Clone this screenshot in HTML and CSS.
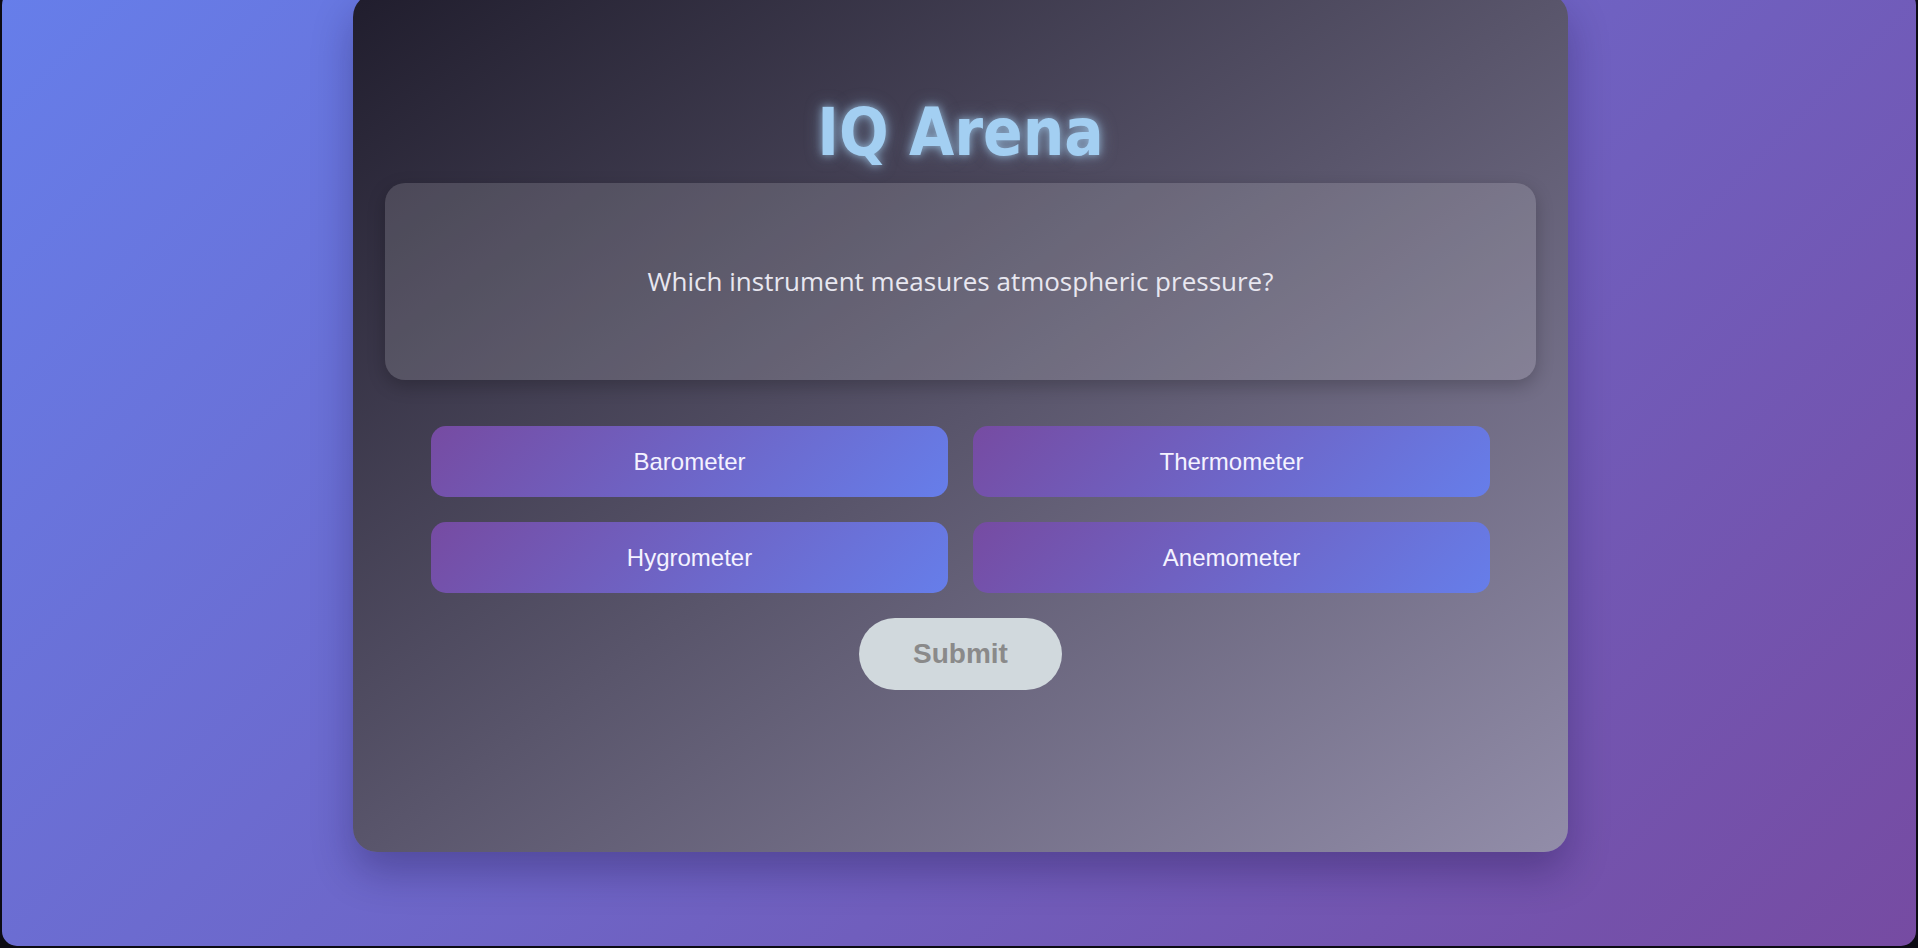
FILE: index.html
```html
<!DOCTYPE html>
<html lang="en">
<head>
<meta charset="utf-8">
<title>IQ Arena</title>
<link rel="stylesheet" href="styles.css">
</head>
<body>
<div class="page">
  <main class="card">
    <h1 class="title">IQ Arena</h1>
    <section class="question-box">
      <p class="question">Which instrument measures atmospheric pressure?</p>
    </section>
    <div class="options">
      <button class="option">Barometer</button>
      <button class="option">Thermometer</button>
      <button class="option">Hygrometer</button>
      <button class="option">Anemometer</button>
    </div>
    <div class="actions">
      <button class="submit" disabled>Submit</button>
    </div>
  </main>
</div>
</body>
</html>
```
FILE: styles.css
```css
html, body {
  margin: 0;
  padding: 0;
  height: 948px;
  overflow: hidden;
  background: #0c0b14;
}

.page {
  margin: -10px 2px 0 2px;
  height: 956px;
  border-radius: 15px;
  background: linear-gradient(135deg, #667eea 0%, #764ba2 100%);
  overflow: hidden;
}

.card {
  box-sizing: border-box;
  width: 1215px;
  height: 859px;
  margin: 3px 0 0 351px;
  padding: 103px 32px 0 32px;
  border-radius: 24px;
  background: linear-gradient(to bottom right, #201d2d 0%, #928da9 100%);
  box-shadow: 0 20px 40px rgba(20, 10, 60, 0.3);
}

.title {
  margin: 0 0 13px 0;
  text-align: center;
  font-family: "DejaVu Sans", sans-serif;
  font-stretch: condensed;
  font-weight: bold;
  font-size: 65px;
  line-height: 74px;
  color: #a3cff2;
  text-shadow: 0 0 8px rgba(163, 207, 242, 0.75), 0 0 18px rgba(163, 207, 242, 0.35);
}

.question-box {
  box-sizing: border-box;
  height: 197px;
  padding: 80px 40px;
  border-radius: 20px;
  background: rgba(255, 255, 255, 0.14);
  box-shadow: 0 6px 18px rgba(0, 0, 0, 0.22);
}

.question {
  margin: 0;
  text-align: center;
  font-family: "Open Sans", sans-serif;
  font-size: 26px;
  line-height: 37px;
  color: #e8e7f0;
}

.options {
  display: grid;
  grid-template-columns: 1fr 1fr;
  gap: 25px;
  margin: 46px 46px 0 46px;
}

.option {
  border: none;
  border-radius: 15px;
  padding: 22px 10px;
  font-family: "Liberation Sans", Arial, sans-serif;
  font-size: 24px;
  line-height: 27px;
  color: #f4f2ff;
  background: linear-gradient(135deg, #764ba2 0%, #667eea 100%);
  cursor: pointer;
}

.actions {
  display: flex;
  justify-content: center;
  margin-top: 25px;
}

.submit {
  border: none;
  border-radius: 36px;
  padding: 20px 54px;
  font-family: "Liberation Sans", Arial, sans-serif;
  font-weight: bold;
  font-size: 28px;
  line-height: 32px;
  color: #8a8a8a;
  background: #d1d9dd;
}
```
